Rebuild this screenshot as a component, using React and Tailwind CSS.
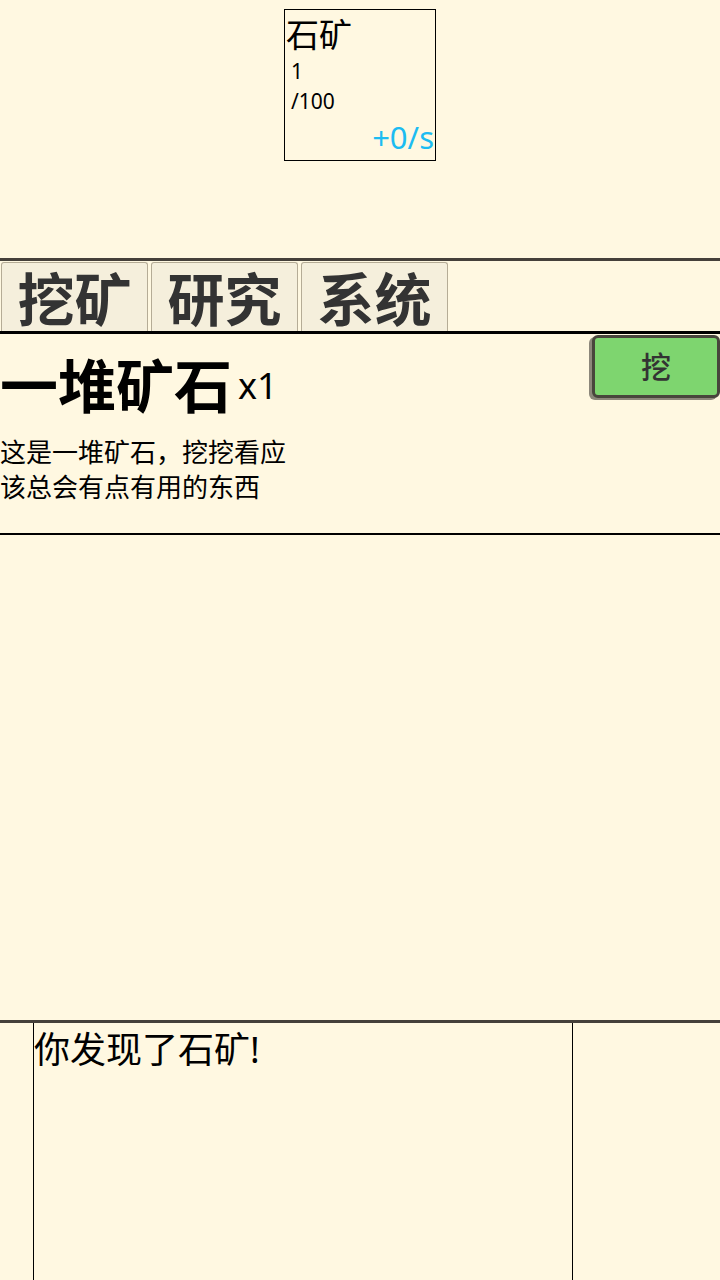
const font = { fontFamily: '"Noto Sans", "Noto Sans CJK SC", sans-serif' }

const tabs = ['挖矿', '研究', '系统']

function ResourceCard() {
  return (
    <div className="mx-auto mt-[9px] w-[152px] h-[152px] border border-black flex flex-col px-[1px]">
      <div className="mt-[4px] text-[33px] leading-[42px] text-black">石矿</div>
      <div className="pl-[5px] text-[21px] leading-[30px] text-black">1</div>
      <div className="pl-[5px] text-[21px] leading-[30px] text-black">/100</div>
      <div className="mt-auto mb-[2px] text-right text-[31px] leading-[42px] text-[#1cbcf2]">+0/s</div>
    </div>
  )
}

export default function App() {
  return (
    <div className="min-h-screen bg-[#fff8e1] overflow-hidden" style={font}>
      <ResourceCard />

      <div className="mt-[97px] h-[3px] bg-[#45403a]" />

      <div className="flex gap-[3px] pl-[1px] pt-[1px]">
        {tabs.map((t) => (
          <button
            key={t}
            type="button"
            className="w-[147px] h-[69px] bg-[#f5efdc] border border-[#b5ac96] border-b-0 rounded-t-[3px] text-[57px] leading-none font-bold text-[#333333] flex items-center justify-center pt-[4px]"
          >
            {t}
          </button>
        ))}
      </div>

      <div className="h-[3px] bg-black" />

      <div className="flex justify-between items-start">
        <div className="pt-[14px]">
          <div className="flex items-center leading-[76px] h-[76px]">
            <span className="text-[58px] font-bold text-black">一堆矿石</span>
            <span className="ml-[6px] text-[36px] leading-none text-black">x1</span>
          </div>
          <div className="mt-[11px] w-[292px] text-[26px] leading-[35px] text-black">
            这是一堆矿石，挖挖看应该总会有点有用的东西
          </div>
        </div>
        <button
          type="button"
          className="mt-[1px] w-[128px] h-[63px] bg-[#7ed56f] border-[3px] border-[#48453c] rounded-[6px] shadow-[-3px_2px_0_#8c877a] text-[30px] font-medium text-[#333333] flex items-center justify-center"
        >
          挖
        </button>
      </div>

      <div className="mt-[28px] h-[2px] bg-black" />

      <div className="h-[485px]" />

      <div className="h-[3px] bg-[#45403a]" />

      <div className="ml-[33px] w-[540px] h-[300px] border border-t-0 border-black">
        <div className="text-[36px] leading-[54px] text-black">你发现了石矿!</div>
      </div>
    </div>
  )
}
